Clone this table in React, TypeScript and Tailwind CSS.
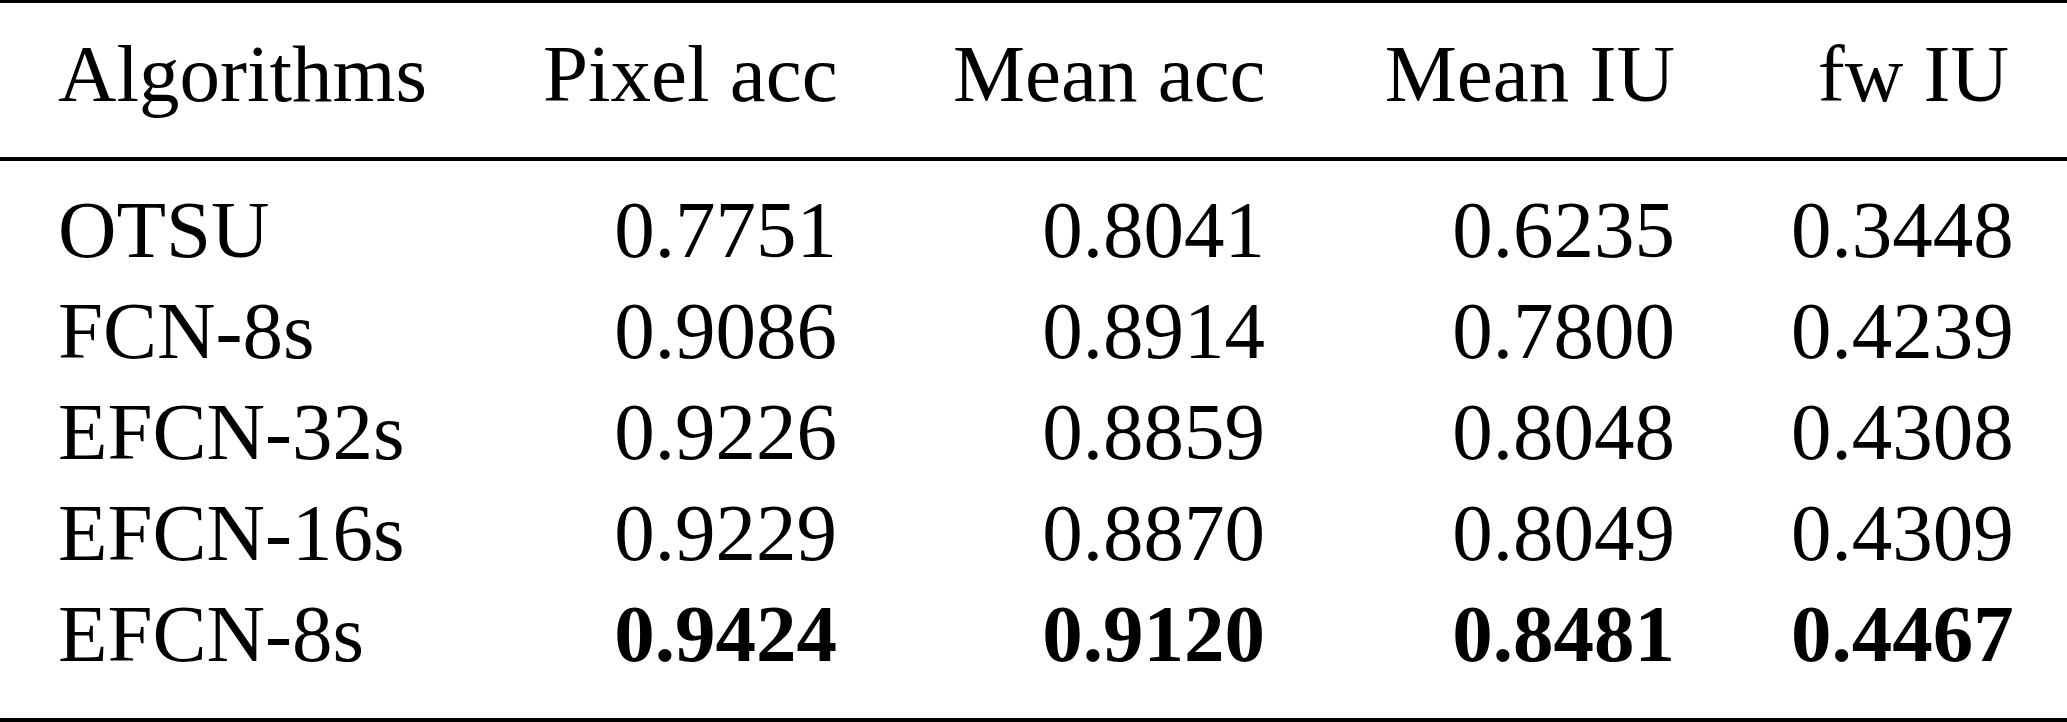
const headers = ['Algorithms', 'Pixel acc', 'Mean acc', 'Mean IU', 'fw IU'];

const rows = [
  { name: 'OTSU', values: ['0.7751', '0.8041', '0.6235', '0.3448'], best: false },
  { name: 'FCN-8s', values: ['0.9086', '0.8914', '0.7800', '0.4239'], best: false },
  { name: 'EFCN-32s', values: ['0.9226', '0.8859', '0.8048', '0.4308'], best: false },
  { name: 'EFCN-16s', values: ['0.9229', '0.8870', '0.8049', '0.4309'], best: false },
  { name: 'EFCN-8s', values: ['0.9424', '0.9120', '0.8481', '0.4467'], best: true },
];

const gridCols = 'grid grid-cols-[485px_410px_428px_410px_334px]';

const App = () => {
  return (
    <div className="w-[2067px] h-[722px] bg-white text-black font-['Liberation_Serif','Times_New_Roman',serif] text-[81px] leading-[101px] whitespace-nowrap">
      <div className="h-[3px] bg-black" />
      <div className={`${gridCols} mt-[21px]`}>
        {headers.map((h, i) => (
          <div key={h} className={`px-[58px] ${i === 0 ? 'text-left' : 'text-right'}`}>
            {h}
          </div>
        ))}
      </div>
      <div className="h-[4px] bg-black mt-[32px]" />
      <div className="flex flex-col pt-[19px] pb-[33px]">
        {rows.map((row) => (
          <div key={row.name} className={gridCols}>
            <div className="px-[58px] text-left">{row.name}</div>
            {row.values.map((v, i) => (
              <div
                key={i}
                className={`px-[58px] text-right ${row.best ? 'font-bold' : 'font-normal'}`}
              >
                {v}
              </div>
            ))}
          </div>
        ))}
      </div>
      <div className="h-[4px] bg-black" />
    </div>
  );
};

export default App;
